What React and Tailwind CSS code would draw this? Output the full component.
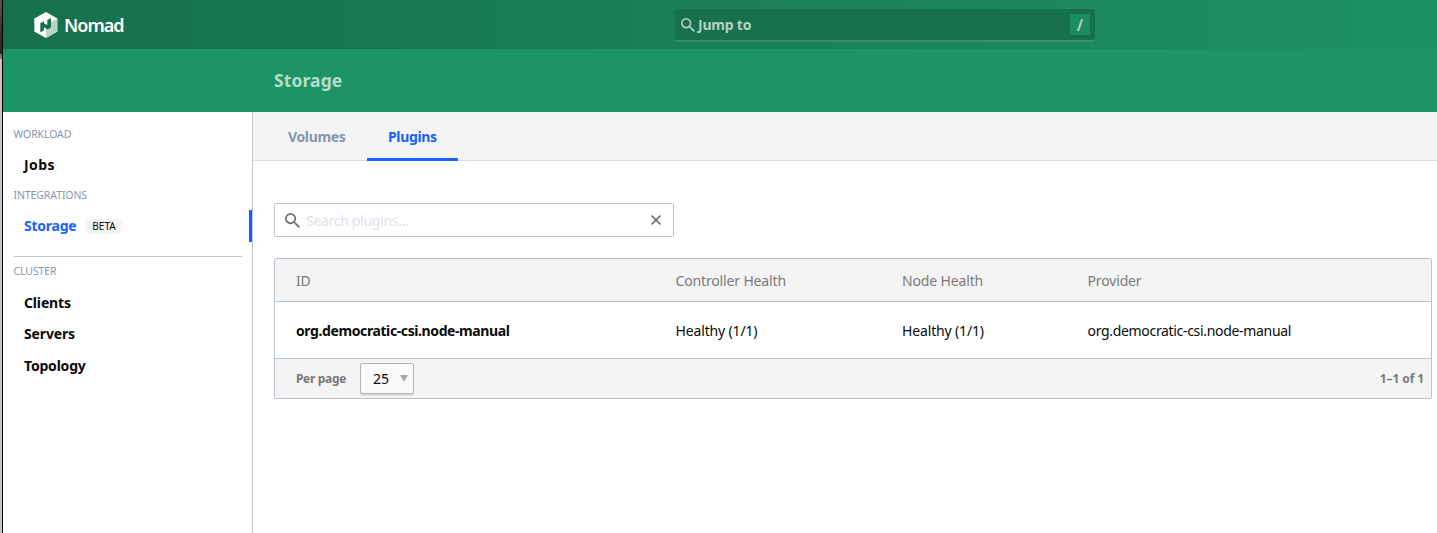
import React from "react";

function SearchIcon({ className }) {
  return (
    <svg viewBox="3 3 17.5 17.5" className={className} fill="currentColor">
      <path d="M15.5 14h-.79l-.28-.27A6.471 6.471 0 0 0 16 9.5 6.5 6.5 0 1 0 9.5 16c1.61 0 3.09-.59 4.23-1.57l.27.28v.79l5 4.99L20.49 19l-4.99-5zm-6 0C7.01 14 5 11.99 5 9.5S7.01 5 9.5 5 14 7.01 14 9.5 11.99 14 9.5 14z" />
    </svg>
  );
}

function Logo() {
  return (
    <svg viewBox="0 0 24 26" className="h-[26px] w-6 shrink-0">
      <path d="M12 0 23.300 6.500v13L12 26 .3 19.500v-13z" fill="#fff" />
      <path d="M12 13 23.300 6.500v13L12 26z" fill="#b9d4c8" />
      <path d="M6.300 11.200 10 9.200v2.300l3.300 1.600V8l3.700-2v9.300l-3.300 2.200L10 15.300v3l-3.700 2.200z" fill="#17704d" />
    </svg>
  );
}

function NavLabel({ children, className }) {
  return <p className={"pl-[10.5px] text-[10.5px] leading-[16px] tracking-[-0.1px] text-[#8597b0] " + className}>{children}</p>;
}

function NavItem({ children, className }) {
  return <a className={"block pl-[21px] text-[14px] font-bold leading-[20px] text-[#0a0a0a] " + className}>{children}</a>;
}

export default function App() {
  return (
    <div className="flex h-[533px] w-[1437px] overflow-hidden bg-white font-['Noto_Sans',sans-serif] text-[14px] text-[#0a0a0a]">
      <div className="flex w-[3px] shrink-0 flex-col border-r border-black bg-[#c6c6c6]">
        <div className="h-[54px] bg-linear-to-b from-[#555] to-[#222]" />
        <div className="h-[5px] bg-[#777]" />
      </div>
      <div className="flex flex-1 flex-col">
        <header className="flex h-[49px] shrink-0 items-center bg-linear-to-r from-[#17704d] to-[#1c9064] pl-[31px]">
          <Logo />
          <span className="ml-[6px] w-[611px] pt-[2px] text-[18px] font-semibold tracking-[-1px] text-white">Nomad</span>
          <div className="flex h-[31px] w-[420px] items-center rounded-[2px] bg-[#17704d] pl-[6px] pr-[5px] text-[#b4d2c5] shadow-[0_2px_0_0_rgba(255,255,255,0.1)]">
            <SearchIcon className="h-[14px] w-[14px]" />
            <span className="ml-[2px] flex-1 pl-px font-bold tracking-[-0.2px]">Jump to</span>
            <span className="flex h-[21px] w-5 items-center justify-center bg-[#1d8b61] text-[16px] font-semibold">/</span>
          </div>
        </header>
        <div className="flex h-[63px] shrink-0 items-center bg-[#1d9467] pl-[271px] text-[17.5px] font-bold tracking-[0.1px] text-[#b4dccb]">Storage</div>
        <div className="flex flex-1">
          <aside className="w-[250px] shrink-0 border-r border-[#bac8d3]">
            <NavLabel className="mt-[14px]">WORKLOAD</NavLabel>
            <NavItem className="mt-[13px] tracking-[0.4px]">Jobs</NavItem>
            <NavLabel className="mt-[12px]">INTEGRATIONS</NavLabel>
            <div className="mt-[7px] flex h-8 items-center border-r-[3px] border-[#1563ff] pl-[21px]">
              <span className="w-[52px] pb-px font-bold tracking-[-0.25px] text-[#1563ff]">Storage</span>
              <span className="ml-[9px] flex h-[15px] w-[38px] items-center justify-center rounded-full bg-[#f4f4f4] text-[10px]">BETA</span>
            </div>
            <hr className="ml-[11px] mr-[10px] mt-[14px] border-[#bac8d3]" />
            <NavLabel className="mt-[6px]">CLUSTER</NavLabel>
            <NavItem className="mt-[14px] tracking-[-0.15px]">Clients</NavItem>
            <NavItem className="mt-[11px] tracking-[-0.15px]">Servers</NavItem>
            <NavItem className="mt-[12px] tracking-[-0.2px]">Topology</NavItem>
          </aside>
          <main className="flex-1">
            <nav className="flex h-[49px] border-b border-[#dbdbdb] bg-[#f4f4f4] pl-[14px] font-bold leading-[50px] tracking-[-0.35px]">
              <a className="w-[100px] pl-[21px] text-[#8597b0]">Volumes</a>
              <a className="h-[49px] w-[91px] border-b-[3px] border-[#1563ff] pl-[21px] text-[#1563ff]">Plugins</a>
            </nav>
            <div className="ml-[21px] mt-[42px] flex h-[34px] w-[400px] items-center rounded-[2px] border border-[#bac3d0] pl-[10px] pr-[12px] text-[#6f6f6f]">
              <SearchIcon className="h-[15px] w-[15px]" />
              <span className="ml-[6px] flex-1 tracking-[-0.3px] text-[#dce2e9]">Search plugins...</span>
              <svg viewBox="0 0 10 10" className="h-[10px] w-[10px]" stroke="currentColor" strokeWidth="1.6">
                <path d="M.6.6l8.800 8.800M9.400.6L.6 9.400" />
              </svg>
            </div>
            <section className="ml-[21px] mt-[21px] h-[141px] w-[1158px] rounded-[2px] border border-[#bac3d0]">
              <div className="grid h-[43px] grid-cols-[379.5px_226.500px_185.500px_1fr] items-center border-b border-[#bac3d0] bg-[#f4f4f4] pl-[21px] tracking-[-0.15px] text-[#7a7a7a]">
                <span>ID</span>
                <span>Controller Health</span>
                <span>Node Health</span>
                <span>Provider</span>
              </div>
              <div className="grid h-[57px] grid-cols-[379.5px_226.500px_185.500px_1fr] items-center border-b border-[#bac3d0] pl-[21px] tracking-[-0.15px]">
                <span className="font-bold tracking-[-0.4px]">org.democratic-csi.node-manual</span>
                <span>Healthy (1/1)</span>
                <span>Healthy (1/1)</span>
                <span className="tracking-[-0.32px]">org.democratic-csi.node-manual</span>
              </div>
              <div className="flex h-[39px] items-center bg-[#f4f4f4] pl-[21px] pr-[7px] text-[12px] font-bold text-[#7a7a7a]">
                <span className="w-[64px] tracking-[-0.33px]">Per page</span>
                <span className="flex h-[31px] w-[54px] items-center rounded-[2px] border border-[#b5b5b5] bg-[#fafafa] pl-[12px] text-[14px] font-normal text-[#0a0a0a] shadow-[0_2px_0_0_#dcdcdc]">
                  25
                  <svg viewBox="0 0 8 7" className="ml-[11px] h-[7px] w-2"><path d="M0 0h8L4 7z" fill="#a9a9a9" /></svg>
                </span>
                <span className="ml-auto tracking-[-0.1px]">1–1 of 1</span>
              </div>
            </section>
          </main>
        </div>
      </div>
    </div>
  );
}
